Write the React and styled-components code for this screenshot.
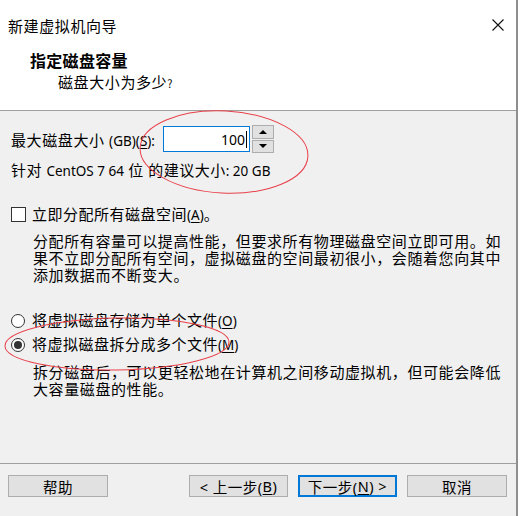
import React from 'react'
import styled, { createGlobalStyle } from 'styled-components'

const GlobalStyle = createGlobalStyle`
  html, body {
    margin: 0;
    padding: 0;
    background: #ffffff;
  }
  body {
    font-family: "Noto Sans", "Noto Sans CJK SC", sans-serif;
    font-size: 15px;
    color: #000;
  }
`

const Window = styled.div`
  position: relative;
  width: 516px;
  height: 516px;
  display: flex;
  flex-direction: column;
  border-right: 2px solid #8f8f8f;
  background: #f0f0f0;
  overflow: hidden;
`

const Header = styled.div`
  height: 110px;
  background: #ffffff;
  border-bottom: 1px solid #a0a0a0;
  display: flex;
  flex-direction: column;
`

const TitleBar = styled.div`
  height: 50px;
  display: flex;
  align-items: center;
  justify-content: space-between;
  padding: 0 12px 0 8px;
  font-family: "Noto Sans CJK SC", sans-serif;
  font-size: 15px;
  letter-spacing: 0.6px;
`

const Heading = styled.div`
  padding-left: 30px;
  height: 21px;
  line-height: 21px;
  font-family: "Noto Sans CJK SC", sans-serif;
  font-weight: 700;
  font-size: 16px;
  letter-spacing: 0.3px;
`

const SubHeading = styled.div`
  padding-left: 58px;
  margin-top: 1px;
  height: 20px;
  line-height: 20px;
  font-family: "Noto Sans CJK SC", sans-serif;
  font-size: 15px;
  letter-spacing: 0.6px;

  small {
    font-size: 11px;
    letter-spacing: 0;
  }
`

const Body = styled.div`
  flex: 1;
  padding: 0 10px 0 11px;
  display: flex;
  flex-direction: column;
`

const SizeRow = styled.div`
  margin-top: 14px;
  height: 28px;
  display: flex;
  align-items: center;
`

const Label = styled.span`
  font-size: 15px;
  white-space: nowrap;
  letter-spacing: ${p => p.$spacing || '0.5px'};
`

const Small = styled.span`
  font-family: "Noto Sans", sans-serif;
  font-size: 13.5px;
  letter-spacing: 0;
`

const Key = styled.span`
  text-decoration: underline;
  text-underline-offset: 2px;
`

const SizeInput = styled.div`
  margin-left: 8px;
  width: 87px;
  height: 26px;
  box-sizing: border-box;
  background: #fff;
  border: 1px solid #0078d7;
  display: flex;
  align-items: center;
  justify-content: flex-end;
  padding-right: 2px;
  font-family: "Noto Sans", sans-serif;
  font-size: 14px;
`

const Caret = styled.span`
  display: inline-block;
  width: 1px;
  height: 17px;
  margin-left: 1px;
  background: #000;
`

const Spinner = styled.div`
  margin-left: 2px;
  width: 22px;
  height: 28px;
  display: flex;
  flex-direction: column;
  gap: 1px;
`

const SpinButton = styled.div`
  flex: 1;
  box-sizing: border-box;
  border: 1px solid #adadad;
  background: #e1e1e1;
  display: flex;
  align-items: center;
  justify-content: center;

  &::after {
    content: '';
    width: 0;
    height: 0;
    border-left: 4px solid transparent;
    border-right: 4px solid transparent;
    ${p => (p.$down ? 'border-top: 4px solid #000;' : 'border-bottom: 4px solid #000;')}
  }
`

const Line = styled.div`
  height: 17px;
  line-height: 17px;
  margin-top: ${p => p.$top || 0}px;
  display: flex;
  align-items: center;
  white-space: nowrap;
  letter-spacing: 0.5px;
`

const Paragraph = styled.div`
  margin-top: ${p => p.$top || 0}px;
  padding-left: 22px;
  line-height: 17px;
  letter-spacing: 0.6px;
  white-space: nowrap;
`

const Check = styled.span`
  width: 15px;
  height: 15px;
  box-sizing: border-box;
  border: 1px solid #333;
  background: #fff;
  margin-right: 6px;
  flex: none;
`

const Radio = styled.span`
  width: 14px;
  height: 14px;
  box-sizing: border-box;
  border: 1px solid #333;
  border-radius: 50%;
  background: #fff;
  margin-right: 7px;
  flex: none;
  display: flex;
  align-items: center;
  justify-content: center;

  &::after {
    content: '';
    width: 8px;
    height: 8px;
    border-radius: 50%;
    background: ${p => (p.$checked ? '#333' : 'transparent')};
  }
`

const Footer = styled.div`
  height: 41px;
  border-top: 1px solid #a0a0a0;
  display: flex;
  align-items: flex-start;
  padding: 11px 9px 0 8px;
  gap: 10px;
`

const Button = styled.div`
  width: ${p => p.$w || 99}px;
  height: 22px;
  box-sizing: border-box;
  border: 1px solid ${p => (p.$primary ? '#0078d7' : '#adadad')};
  box-shadow: ${p => (p.$primary ? 'inset 0 0 0 1px #0078d7' : 'none')};
  background: #e1e1e1;
  display: flex;
  align-items: center;
  justify-content: center;
  font-size: 14.5px;
  letter-spacing: 0.5px;
  margin-left: ${p => (p.$push ? 'auto' : '0')};
`

const Overlay = styled.svg`
  position: absolute;
  left: 0;
  top: 0;
  pointer-events: none;
`

const CloseIcon = () => (
  <svg width="12" height="12" viewBox="0 0 12 12">
    <path d="M0.5 0.5 L11.5 11.5 M11.5 0.5 L0.5 11.5" stroke="#111" strokeWidth="1.1" fill="none" />
  </svg>
)

export default function App() {
  return (
    <>
      <GlobalStyle />
      <Window>
        <Header>
          <TitleBar>
            <span>新建虚拟机向导</span>
            <CloseIcon />
          </TitleBar>
          <Heading>指定磁盘容量</Heading>
          <SubHeading>磁盘大小为多少<small>?</small></SubHeading>
        </Header>

        <Body>
          <SizeRow>
            <Label $spacing="0.6px">最大磁盘大小 <Small>(GB)(<Key>S</Key>):</Small></Label>
            <SizeInput>100<Caret /></SizeInput>
            <Spinner>
              <SpinButton />
              <SpinButton $down />
            </Spinner>
          </SizeRow>

          <Line $top={9}>
            <Label>针对 <Small>CentOS 7 64</Small> 位 的建议大小<Small>: 20 GB</Small></Label>
          </Line>

          <Line $top={27}>
            <Check />
            <Label>立即分配所有磁盘空间<Small>(<Key>A</Key>)</Small>。</Label>
          </Line>
          <Paragraph $top={10}>
            分配所有容量可以提高性能，但要求所有物理磁盘空间立即可用。如<br />
            果不立即分配所有空间，虚拟磁盘的空间最初很小，会随着您向其中<br />
            添加数据而不断变大。
          </Paragraph>

          <Line $top={28}>
            <Radio />
            <Label>将虚拟磁盘存储为单个文件<Small>(<Key>O</Key>)</Small></Label>
          </Line>
          <Line $top={7}>
            <Radio $checked />
            <Label>将虚拟磁盘拆分成多个文件<Small>(<Key>M</Key>)</Small></Label>
          </Line>
          <Paragraph $top={11}>
            拆分磁盘后，可以更轻松地在计算机之间移动虚拟机，但可能会降低<br />
            大容量磁盘的性能。
          </Paragraph>
        </Body>

        <Footer>
          <Button $w={100}>帮助</Button>
          <Button $push>&lt; 上一步(<Key>B</Key>)</Button>
          <Button $primary>下一步(<Key>N</Key>) &gt;</Button>
          <Button $w={100}>取消</Button>
        </Footer>

        <Overlay width="516" height="516" viewBox="0 0 516 516">
          <ellipse cx="224" cy="152" rx="84" ry="41" transform="rotate(3 224 152)" fill="none" stroke="#e8404a" strokeWidth="1" />
          <ellipse cx="117" cy="344" rx="112" ry="26" transform="rotate(-1 117 344)" fill="none" stroke="#e8404a" strokeWidth="1" />
        </Overlay>
      </Window>
    </>
  )
}
